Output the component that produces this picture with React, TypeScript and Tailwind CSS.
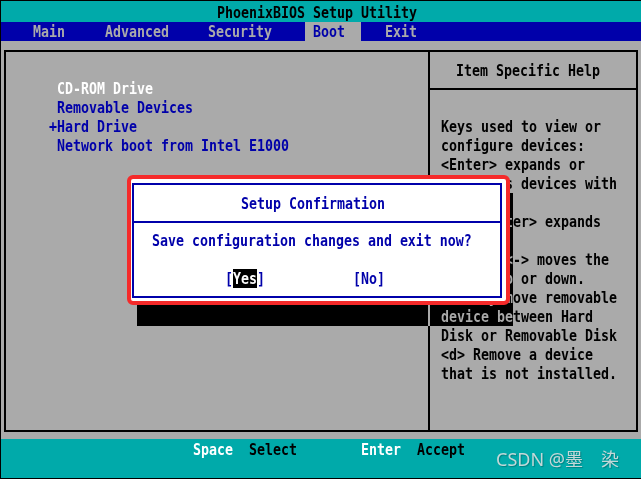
import React from 'react';

const T: React.FC<{ children: React.ReactNode; className?: string }> = ({ children, className = '' }) => (
  <span className={`inline-block scale-y-125 whitespace-pre ${className}`}>{children}</span>
);

const bootItems = [
  { mark: ' ', label: 'CD-ROM Drive', color: 'text-white' },
  { mark: ' ', label: 'Removable Devices', color: 'text-[#0000aa]' },
  { mark: '+', label: 'Hard Drive', color: 'text-[#0000aa]' },
  { mark: ' ', label: 'Network boot from Intel E1000', color: 'text-[#0000aa]' },
];

const helpLines = [
  'Keys used to view or',
  'configure devices:',
  '<Enter> expands or',
  'collapses devices with',
  'a + or -',
  '<Ctrl+Enter> expands',
  'all',
  '<+> and <-> moves the',
  'device up or down.',
  '<n> May move removable',
  'device between Hard',
  'Disk or Removable Disk',
  '<d> Remove a device',
  'that is not installed.',
];

export default function App() {
  return (
    <div className="relative w-[641px] h-[479px] overflow-hidden border-l border-t border-b border-black bg-[#aaaaaa] font-['DejaVu_Sans_Mono',monospace] font-bold text-[13.29px] leading-[19px]">
      {/* title */}
      <div className="h-[21px] bg-[#00aaaa] pl-[216px] pt-[2px] text-black">
        <T>PhoenixBIOS Setup Utility</T>
      </div>

      {/* menu */}
      <div className="h-[19px] bg-[#0000aa] flex pl-[32px] text-[#aaaaaa]">
        <T>Main</T>
        <T className="ml-[40px]">Advanced</T>
        <T className="ml-[39px]">Security</T>
        <div className="ml-[33px] w-[56px] pl-[8px] bg-[#aaaaaa] text-[#0000aa]">
          <T>Boot</T>
        </div>
        <T className="ml-[24px]">Exit</T>
      </div>

      {/* body */}
      <div className="h-[398px] pt-[9px] pb-[7px] pl-[3px] pr-[3px]">
        <div className="h-full flex border-2 border-black">
          <div className="w-[422px] pt-[27px] pl-[43px]">
            {bootItems.map((item) => (
              <div key={item.label} className={item.color}>
                <T>{item.mark + item.label}</T>
              </div>
            ))}
          </div>
          <div className="flex-1 flex flex-col border-l-2 border-black text-black">
            <div className="h-[38px] flex items-center pl-[26px] border-b-2 border-black">
              <T>Item Specific Help</T>
            </div>
            <div className="pt-[27px] pl-[11px]">
              {helpLines.map((line) => (
                <div key={line}>
                  <T>{line}</T>
                </div>
              ))}
            </div>
          </div>
        </div>
      </div>

      {/* footer */}
      <div className="h-[39px] bg-[#00aaaa] flex pl-[192px] pt-[3px]">
        <T className="text-white">Space</T>
        <T className="ml-[16px] text-black">Select</T>
        <T className="ml-[64px] text-white">Enter</T>
        <T className="ml-[16px] text-black">Accept</T>
      </div>

      {/* dialog shadow */}
      <div className="absolute left-[136px] top-[192px] w-[376px] h-[133px] bg-[#aaaaaa] mix-blend-difference" />

      {/* dialog */}
      <div className="absolute left-[126px] top-[174px] w-[383px] h-[130px] rounded-[6px] border-4 border-[#f52a2a] bg-white pl-[1px] pr-[4px] pt-[4px] pb-[3px]">
        <div className="h-full border-2 border-[#0000aa] text-[#0000aa]">
          <div className="h-[38px] flex items-center pl-[107px] border-b-2 border-[#0000aa]">
            <T>Setup Confirmation</T>
          </div>
          <div className="pt-[8px] pl-[18px]">
            <T>Save configuration changes and exit now?</T>
          </div>
          <div className="mt-[19px] pl-[91px] flex">
            <T>[</T>
            <span className="h-[19px] bg-black text-white">
              <T>Yes</T>
            </span>
            <T>]</T>
            <T className="ml-[88px]">[No]</T>
          </div>
        </div>
      </div>

      {/* watermark */}
      <div className="absolute left-[495px] top-[446px] font-['Noto_Sans','Noto_Sans_CJK_SC',sans-serif] font-normal text-[18px] leading-[24px] text-[#c2d8d8] [text-shadow:1px_1px_1px_rgba(0,0,0,0.25)]">
        CSDN @墨　染
      </div>
    </div>
  );
}
